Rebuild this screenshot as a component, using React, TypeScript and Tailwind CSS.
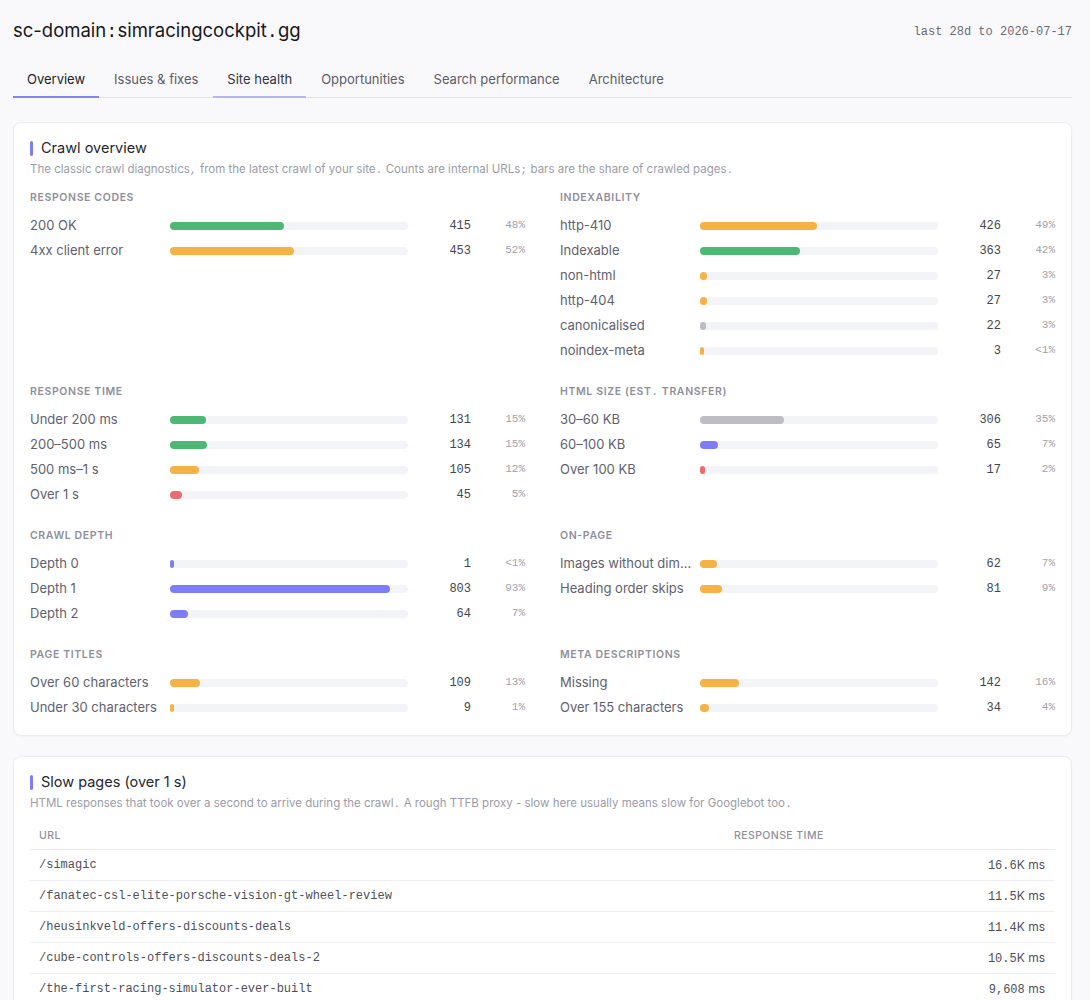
import React from 'react';

type Row = { label: string; count: number; pct: string; color: string };
type Section = { title: string; rows: Row[] };

const TOTAL = 868;

const GREEN = 'bg-[#4cb873]';
const ORANGE = 'bg-[#f6b244]';
const BLUE = 'bg-[#7d7ef7]';
const RED = 'bg-[#ef6b6f]';
const GRAY = 'bg-[#bdbdc3]';

const MONO = "[font-family:'Liberation_Mono','DejaVu_Sans_Mono',monospace]";

const leftSections: Section[] = [
    { title: 'Response codes', rows: [
        { label: '200 OK', count: 415, pct: '48%', color: GREEN },
        { label: '4xx client error', count: 453, pct: '52%', color: ORANGE },
    ] },
    { title: 'Response time', rows: [
        { label: 'Under 200 ms', count: 131, pct: '15%', color: GREEN },
        { label: '200–500 ms', count: 134, pct: '15%', color: GREEN },
        { label: '500 ms–1 s', count: 105, pct: '12%', color: ORANGE },
        { label: 'Over 1 s', count: 45, pct: '5%', color: RED },
    ] },
    { title: 'Crawl depth', rows: [
        { label: 'Depth 0', count: 1, pct: '<1%', color: BLUE },
        { label: 'Depth 1', count: 803, pct: '93%', color: BLUE },
        { label: 'Depth 2', count: 64, pct: '7%', color: BLUE },
    ] },
    { title: 'Page titles', rows: [
        { label: 'Over 60 characters', count: 109, pct: '13%', color: ORANGE },
        { label: 'Under 30 characters', count: 9, pct: '1%', color: ORANGE },
    ] },
];

const rightSections: Section[] = [
    { title: 'Indexability', rows: [
        { label: 'http-410', count: 426, pct: '49%', color: ORANGE },
        { label: 'Indexable', count: 363, pct: '42%', color: GREEN },
        { label: 'non-html', count: 27, pct: '3%', color: ORANGE },
        { label: 'http-404', count: 27, pct: '3%', color: ORANGE },
        { label: 'canonicalised', count: 22, pct: '3%', color: GRAY },
        { label: 'noindex-meta', count: 3, pct: '<1%', color: ORANGE },
    ] },
    { title: 'HTML size (est. transfer)', rows: [
        { label: '30–60 KB', count: 306, pct: '35%', color: GRAY },
        { label: '60–100 KB', count: 65, pct: '7%', color: BLUE },
        { label: 'Over 100 KB', count: 17, pct: '2%', color: RED },
    ] },
    { title: 'On-page', rows: [
        { label: 'Images without dimensions', count: 62, pct: '7%', color: ORANGE },
        { label: 'Heading order skips', count: 81, pct: '9%', color: ORANGE },
    ] },
    { title: 'Meta descriptions', rows: [
        { label: 'Missing', count: 142, pct: '16%', color: ORANGE },
        { label: 'Over 155 characters', count: 34, pct: '4%', color: ORANGE },
    ] },
];

const slowPages = [
    { url: '/simagic', num: '16.6', unit: 'K ms' },
    { url: '/fanatec-csl-elite-porsche-vision-gt-wheel-review', num: '11.5', unit: 'K ms' },
    { url: '/heusinkveld-offers-discounts-deals', num: '11.4', unit: 'K ms' },
    { url: '/cube-controls-offers-discounts-deals-2', num: '10.5', unit: 'K ms' },
    { url: '/the-first-racing-simulator-ever-built', num: '9,608', unit: ' ms' },
];

const tabs = ['Overview', 'Issues & fixes', 'Site health', 'Opportunities', 'Search performance', 'Architecture'];

function Punct({ text }: { text: string }) {
    const parts = text.split(/([.,;:])/);
    return (
        <>
            {parts.map((p, i) =>
                /^[.,;:]$/.test(p)
                    ? <span key={i} className={MONO}>{p}</span>
                    : <React.Fragment key={i}>{p}</React.Fragment>
            )}
        </>
    );
}

function BarRow({ row }: { row: Row }) {
    const share = (row.count / TOTAL) * 100;
    return (
        <div className="grid grid-cols-[140px_1fr_63px_54px] items-center h-[25px]">
            <span className="truncate pr-[6px] text-[13px] text-[#61616c]">{row.label}</span>
            <div className="h-[8px] rounded-full bg-[#f3f4f8]">
                <div className={`h-full rounded-full ${row.color}`} style={{ width: `max(${share}%, 4px)` }} />
            </div>
            <span className={`text-right text-[12px] text-[#45454f] ${MONO}`}>{row.count}</span>
            <span className={`text-right text-[11px] text-[#a2a2ac] ${MONO}`}>{row.pct}</span>
        </div>
    );
}

function SectionBlock({ section }: { section: Section }) {
    return (
        <div>
            <h3 className="mb-[7px] h-4 leading-4 text-[10.5px] font-semibold uppercase tracking-[0.06em] text-[#8f8f9a]">
                <Punct text={section.title} />
            </h3>
            {section.rows.map((r) => <BarRow key={r.label} row={r} />)}
        </div>
    );
}

function CardTitle({ title, desc }: { title: string; desc: string }) {
    return (
        <>
            <div className="flex items-center gap-2 h-5">
                <span className="w-[3px] h-[15px] rounded-sm bg-[#7d7ef7]" />
                <h2 className="text-[14.5px] text-[#26262e]">{title}</h2>
            </div>
            <p className="mt-[3px] leading-4 text-[11.5px] text-[#9c9ca7]"><Punct text={desc} /></p>
        </>
    );
}

export default function App() {
    return (
        <div className="min-h-screen bg-[#f9f9fb] pl-[13px] pr-[18px] pt-[18px] pb-6 [font-family:Inter,'Noto_Sans',sans-serif]">
            <div className="flex items-center justify-between h-7">
                <h1 className="text-[18.5px] text-[#17171c]">
                    sc-domain<span className={MONO}>:</span>simracingcockpit<span className={MONO}>.</span>gg
                </h1>
                <span className={`text-[12px] text-[#6b6b76] ${MONO}`}>last 28d to 2026-07-17</span>
            </div>

            <div className="mt-4 flex gap-px border-b border-[#e2e2e8]">
                {tabs.map((t, i) => (
                    <div
                        key={t}
                        className={`px-[14px] pt-2 pb-2 -mb-px border-b-2 text-[13px] leading-[18px] ${
                            i === 0 ? 'border-[#8584f3] text-[#22222a]' : i === 2 ? 'border-[#b7b6f5] text-[#33333c]' : 'border-transparent text-[#5c5c66]'
                        }`}
                    >
                        {t}
                    </div>
                ))}
            </div>

            <div className="mt-6 flex flex-col gap-5">
                <section className="rounded-lg border border-[#ececf1] bg-white px-4 pt-[15px] pb-[15px] shadow-[0_1px_2px_rgba(0,0,0,0.03)]">
                    <CardTitle
                        title="Crawl overview"
                        desc="The classic crawl diagnostics, from the latest crawl of your site. Counts are internal URLs; bars are the share of crawled pages."
                    />
                    <div className="mt-3 grid grid-cols-2 gap-x-[35px] gap-y-[21px]">
                        {leftSections.map((s, i) => (
                            <React.Fragment key={s.title}>
                                <SectionBlock section={s} />
                                <SectionBlock section={rightSections[i]} />
                            </React.Fragment>
                        ))}
                    </div>
                </section>

                <section className="rounded-lg border border-[#ececf1] bg-white px-4 pt-[15px] pb-2 shadow-[0_1px_2px_rgba(0,0,0,0.03)]">
                    <CardTitle
                        title="Slow pages (over 1 s)"
                        desc="HTML responses that took over a second to arrive during the crawl. A rough TTFB proxy - slow here usually means slow for Googlebot too."
                    />
                    <table className="mt-[11px] w-full border-collapse">
                        <thead>
                            <tr className="border-b border-[#e9e9ee]">
                                <th className="w-[695px] px-[9px] py-[5px] text-left text-[10.5px] font-medium uppercase tracking-[0.04em] text-[#8f8f9a] leading-4">URL</th>
                                <th className="px-[9px] py-[5px] text-left text-[10.5px] font-medium uppercase tracking-[0.04em] text-[#8f8f9a] leading-4">Response time</th>
                            </tr>
                        </thead>
                        <tbody>
                            {slowPages.map((p) => (
                                <tr key={p.url} className="border-b border-[#f0f0f4] h-[31px]">
                                    <td className={`px-[9px] text-[12px] text-[#4f4f59] ${MONO}`}>{p.url}</td>
                                    <td className="px-[10px] text-right text-[12px] text-[#4f4f59]">
                                        <span className={MONO}>{p.num}</span>{p.unit}
                                    </td>
                                </tr>
                            ))}
                        </tbody>
                    </table>
                </section>
            </div>
        </div>
    );
}
